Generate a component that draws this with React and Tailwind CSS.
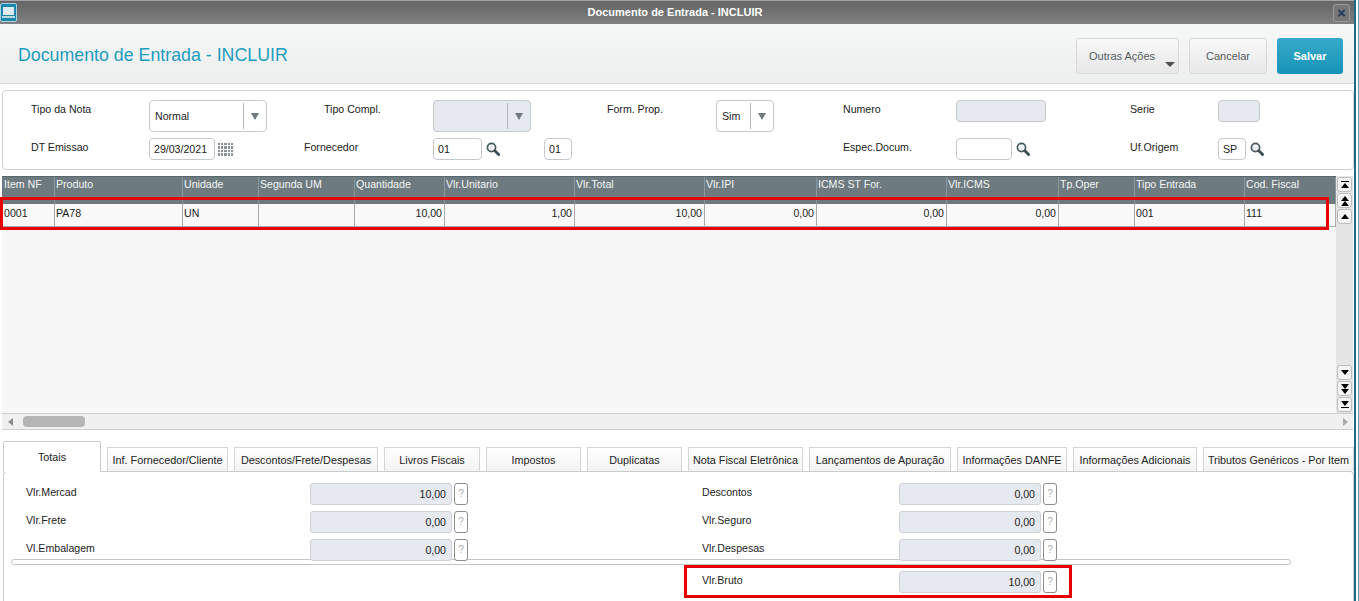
const columns = [
  { name: 'Item NF', width: 'w-[53px]', value: '0001' },
  { name: 'Produto', width: 'w-[128px]', value: 'PA78' },
  { name: 'Unidade', width: 'w-[76px]', value: 'UN' },
  { name: 'Segunda UM', width: 'w-[96px]', value: '' },
  { name: 'Quantidade', width: 'w-[90px]', value: '10,00', right: true },
  { name: 'Vlr.Unitario', width: 'w-[130px]', value: '1,00', right: true },
  { name: 'Vlr.Total', width: 'w-[130px]', value: '10,00', right: true },
  { name: 'Vlr.IPI', width: 'w-[112px]', value: '0,00', right: true },
  { name: 'ICMS ST For.', width: 'w-[130px]', value: '0,00', right: true },
  { name: 'Vlr.ICMS', width: 'w-[112px]', value: '0,00', right: true },
  { name: 'Tp.Oper', width: 'w-[76px]', value: '' },
  { name: 'Tipo Entrada', width: 'w-[110px]', value: '001' },
  { name: 'Cod. Fiscal', width: 'w-[91px]', value: '111' },
]

const tabs = [
  { name: 'Inf. Fornecedor/Cliente', width: 'w-[121px]' },
  { name: 'Descontos/Frete/Despesas', width: 'w-[144px]' },
  { name: 'Livros Fiscais', width: 'w-[96px]' },
  { name: 'Impostos', width: 'w-[95px]' },
  { name: 'Duplicatas', width: 'w-[95px]' },
  { name: 'Nota Fiscal Eletrônica', width: 'w-[115px]' },
  { name: 'Lançamentos de Apuração', width: 'w-[142px]' },
  { name: 'Informações DANFE', width: 'w-[110px]' },
  { name: 'Informações Adicionais', width: 'w-[124px]' },
  { name: 'Tributos Genéricos - Por Item', width: 'w-[151px]' },
]

function Lupa() {
  return (
    <svg width="14" height="14" viewBox="0 0 14 14" fill="none" className="shrink-0">
      <circle cx="5.5" cy="5.5" r="4.1" stroke="#4a5a63" strokeWidth="1.7" fill="#eef2f4" />
      <path d="M8.8 8.8 L12.6 12.6" stroke="#3f4d55" strokeWidth="2.8" strokeLinecap="round" />
    </svg>
  )
}

function Combo({ value, width, disabled }) {
  return (
    <div className={`${width} h-[32px] flex items-center rounded border border-[#c6c9cc] ${disabled ? 'bg-[#e6e9f0]' : 'bg-white'}`}>
      <span className="flex-1 pl-[5px] pt-[1px]">{value}</span>
      <div className="w-[1px] h-[26px] bg-[#b4b7b9]"></div>
      <div className="w-[22px] flex justify-center">
        <div className="w-0 h-0 border-l-[4px] border-r-[4px] border-t-[7px] border-l-transparent border-r-transparent border-t-[#6f7b81]"></div>
      </div>
    </div>
  )
}

function Campo({ value, width, disabled }) {
  return (
    <div className={`${width} h-[22px] flex items-center px-[4px] pt-[1px] rounded border border-[#c6c9cc] ${disabled ? 'bg-[#e6e9f0]' : 'bg-white'}`}>
      {value}
    </div>
  )
}

function Valor({ label, value, labelWidth }) {
  return (
    <div className="flex items-center h-[22px]">
      <span className={`${labelWidth} -mt-[3px]`}>{label}</span>
      <div className="w-[142px] h-[22px] flex items-center justify-end pr-[5px] rounded-[3px] border border-[#cfd2d5] bg-[#e6e9f0]">{value}</div>
      <div className="w-[14px] h-[22px] ml-[2px] flex items-center justify-center rounded-[3px] border border-[#8b8f92] bg-white text-[#a9adb0] text-[10px]">?</div>
    </div>
  )
}

function BotaoScroll({ kind }) {
  const up = kind.startsWith('up')
  const tri = up
    ? 'border-b-[5px] border-b-black'
    : 'border-t-[5px] border-t-black'
  return (
    <div className="w-[15px] h-[15px] flex flex-col items-center justify-center rounded-[3px] border border-[#bdbdbd] bg-[#f4f4f4]">
      {kind === 'upEnd' && <div className="w-[8px] h-[1px] mb-[1px] bg-black"></div>}
      <div className={`w-0 h-0 border-l-[4px] border-r-[4px] border-l-transparent border-r-transparent ${tri}`}></div>
      {(kind === 'upDouble' || kind === 'downDouble') && (
        <div className={`w-0 h-0 border-l-[4px] border-r-[4px] border-l-transparent border-r-transparent ${tri}`}></div>
      )}
      {kind === 'downEnd' && <div className="w-[8px] h-[1px] mt-[1px] bg-black"></div>}
    </div>
  )
}

export default function App() {
  return (
    <div className="w-[1359px] h-[601px] overflow-hidden bg-white flex text-[10.6px] leading-none text-[#222] font-['Liberation_Sans',Arial,sans-serif]">
      <div className="w-[1354px] h-full flex flex-col shrink-0">
        {/* barra da janela */}
        <div className="h-[24px] shrink-0 flex items-center border-t border-[#a5a5a5] bg-gradient-to-b from-[#656565] to-[#808080]">
          <div className="w-[17px] h-[19px] rounded-[2px] border border-[#a8d0dc] bg-[#1a87ad] flex flex-col items-center justify-center">
            <div className="w-[11px] h-[8px] bg-[#dfeaf0]"></div>
            <div className="w-[13px] h-[2px] mt-[1px] bg-[#bcd6e0]"></div>
          </div>
          <span className="flex-1 text-center text-[11px] font-bold text-white">Documento de Entrada - INCLUIR</span>
          <div className="w-[17px] h-[18px] mr-[4px] rounded-[3px] border border-[#9a9a9a] bg-[#777777] flex items-center justify-center text-[#22365a] font-bold text-[15px]">×</div>
        </div>

        {/* cabecalho */}
        <div className="h-[60px] shrink-0 flex items-center justify-between pl-[18px] pr-[11px] border-b border-[#d6d8d8] bg-gradient-to-b from-[#f6f7f7] to-[#edefef]">
          <h1 className="text-[17.8px] text-[#1e9cc0] mt-[5px]">Documento de Entrada - INCLUIR</h1>
          <div className="flex items-center gap-[10px] mt-[5px] text-[11px] text-[#555c62]">
            <div className="w-[103px] h-[36px] relative flex items-center pl-[12px] rounded-[3px] border border-[#d8d8d8] bg-gradient-to-b from-[#f9f9f9] to-[#e7e7e7]">
              Outras Ações
              <div className="absolute right-[3px] bottom-[6px] w-0 h-0 border-l-[5px] border-r-[5px] border-t-[5px] border-l-transparent border-r-transparent border-t-[#4c5156]"></div>
            </div>
            <div className="w-[78px] h-[36px] flex items-center justify-center rounded-[3px] border border-[#d8d8d8] bg-gradient-to-b from-[#f9f9f9] to-[#e7e7e7]">Cancelar</div>
            <div className="w-[66px] h-[36px] flex items-center justify-center rounded-[3px] font-bold text-white bg-gradient-to-b from-[#36a9c8] to-[#1594b8]">Salvar</div>
          </div>
        </div>

        {/* filtros */}
        <div className="h-[80px] shrink-0 mt-[6px] ml-[2px] pt-[9px] pl-[28px] rounded border border-[#cfd1d2] bg-white">
          <div className="grid grid-cols-[118px_155px_129px_174px_109px_127px_113px_174px_88px_1fr] grid-rows-[32px_22px] gap-y-[6px]">
            <span className="pt-[4px]">Tipo da Nota</span>
            <Combo value="Normal" width="w-[118px]" />
            <span className="pt-[4px] pl-[20px]">Tipo Compl.</span>
            <Combo width="w-[98px]" disabled />
            <span className="pt-[4px]">Form. Prop.</span>
            <Combo value="Sim" width="w-[58px]" />
            <span className="pt-[4px]">Numero</span>
            <Campo width="w-[90px]" disabled />
            <span className="pt-[4px]">Serie</span>
            <Campo width="w-[42px]" disabled />

            <span className="pt-[4px]">DT Emissao</span>
            <div className="flex items-center gap-[3px]">
              <Campo value="29/03/2021" width="w-[66px]" />
              <div className="grid grid-cols-5 gap-[1px] w-[15px]">
                {Array.from({ length: 20 }).map((_, i) => (
                  <div key={i} className="h-[2.5px] bg-[#8a9298]"></div>
                ))}
              </div>
            </div>
            <span className="pt-[4px]">Fornecedor</span>
            <div className="flex items-center">
              <Campo value="01" width="w-[49px]" />
              <div className="ml-[4px] mr-[44px]"><Lupa /></div>
              <Campo value="01" width="w-[28px]" />
            </div>
            <span></span>
            <span></span>
            <span className="pt-[4px]">Espec.Docum.</span>
            <div className="flex items-center gap-[4px]">
              <Campo width="w-[56px]" />
              <Lupa />
            </div>
            <span className="pt-[4px]">Uf.Origem</span>
            <div className="flex items-center gap-[4px]">
              <Campo value="SP" width="w-[28px]" />
              <Lupa />
            </div>
          </div>
        </div>

        {/* grid de itens */}
        <div className="h-[237px] shrink-0 mt-[6px] ml-[2px] mr-[1px] flex relative">
          <div className="flex-1 flex flex-col bg-[#f7f7f7]">
            <div className="h-[28px] flex bg-[#6d7b80] text-[#f4f6f6] border-t border-[#59666b]">
              {columns.map((c) => (
                <div key={c.name} className={`${c.width} shrink-0 pl-[1px] first:pl-[2px] pt-[2px] border-r border-[#8d989c]`}>{c.name}</div>
              ))}
            </div>
            <div className="h-[23px] flex bg-[#f9f9f9] border-b border-[#aaaaaa] text-[#1d1d1d]">
              {columns.map((c) => (
                <div key={c.name} className={`${c.width} shrink-0 pl-[1px] first:pl-[2px] pr-[2px] pt-[4px] border-r border-[#aaaaaa] ${c.right ? 'text-right' : ''}`}>{c.value}</div>
              ))}
            </div>
          </div>
          <div className="w-[17px] shrink-0 flex flex-col justify-between items-center py-[1px] bg-[#e5e5e5]">
            <div className="flex flex-col gap-[1px]">
              <BotaoScroll kind="upEnd" />
              <BotaoScroll kind="upDouble" />
              <BotaoScroll kind="up" />
            </div>
            <div className="flex flex-col gap-[1px]">
              <BotaoScroll kind="down" />
              <BotaoScroll kind="downDouble" />
              <BotaoScroll kind="downEnd" />
            </div>
          </div>
          <div className="absolute left-[-2px] top-[21px] w-[1329px] h-[33px] border-[3px] border-[#e60000]"></div>
        </div>

        {/* barra de rolagem horizontal */}
        <div className="h-[17px] shrink-0 ml-[2px] mr-[1px] flex items-center justify-between pl-[6px] pr-[5px] border-y border-[#cfcfcf] bg-[#f0f0f0]">
          <div className="flex items-center gap-[10px]">
            <div className="w-0 h-0 border-y-[4px] border-r-[5px] border-y-transparent border-r-[#8c8c8c]"></div>
            <div className="w-[62px] h-[11px] rounded-[4px] bg-[#b5b5b5]"></div>
          </div>
          <div className="w-0 h-0 border-y-[4px] border-l-[5px] border-y-transparent border-l-[#a9a9a9]"></div>
        </div>

        {/* abas */}
        <div className="h-[30px] shrink-0 mt-[11px] ml-[3px] flex items-end gap-[6px] relative z-10 text-[10.8px]">
          <div className="w-[98px] h-[31px] -mb-[1px] flex items-center justify-center rounded-t-[2px] border border-b-0 border-[#c9cbcc] bg-white">Totais</div>
          {tabs.map((t) => (
            <div key={t.name} className={`${t.width} h-[24px] shrink-0 flex items-center justify-center whitespace-nowrap pt-[1px] border border-b-0 border-[#d4d6d6] bg-gradient-to-b from-white to-[#f3f3f3]`}>{t.name}</div>
          ))}
        </div>

        {/* totais */}
        <div className="flex-1 ml-[3px] pt-[11px] rounded-t border border-b-0 border-[#c9cbcc] bg-white">
          <div className="relative z-10 pl-[22px] grid grid-cols-[676px_1fr] gap-y-[6px]">
            <Valor label="Vlr.Mercad" value="10,00" labelWidth="w-[284px]" />
            <Valor label="Descontos" value="0,00" labelWidth="w-[197px]" />
            <Valor label="Vlr.Frete" value="0,00" labelWidth="w-[284px]" />
            <Valor label="Vlr.Seguro" value="0,00" labelWidth="w-[197px]" />
            <Valor label="Vl.Embalagem" value="0,00" labelWidth="w-[284px]" />
            <Valor label="Vlr.Despesas" value="0,00" labelWidth="w-[197px]" />
          </div>
          <div className="h-[6px] w-[1280px] ml-[7px] -mt-[2px] rounded-full border border-[#c3c5c6]"></div>
          <div className="relative pl-[698px] mt-[6px]">
            <Valor label="Vlr.Bruto" value="10,00" labelWidth="w-[197px]" />
            <div className="absolute left-[680px] top-[-6px] w-[388px] h-[33px] border-[3px] border-[#e60000]"></div>
          </div>
        </div>
      </div>

      {/* borda da janela */}
      <div className="w-[2px] h-full shrink-0 bg-[#1b6c86]"></div>
      <div className="w-[2px] h-full shrink-0 bg-white"></div>
      <div className="w-[1px] h-full shrink-0 bg-[#6f9aa8]"></div>
    </div>
  )
}
